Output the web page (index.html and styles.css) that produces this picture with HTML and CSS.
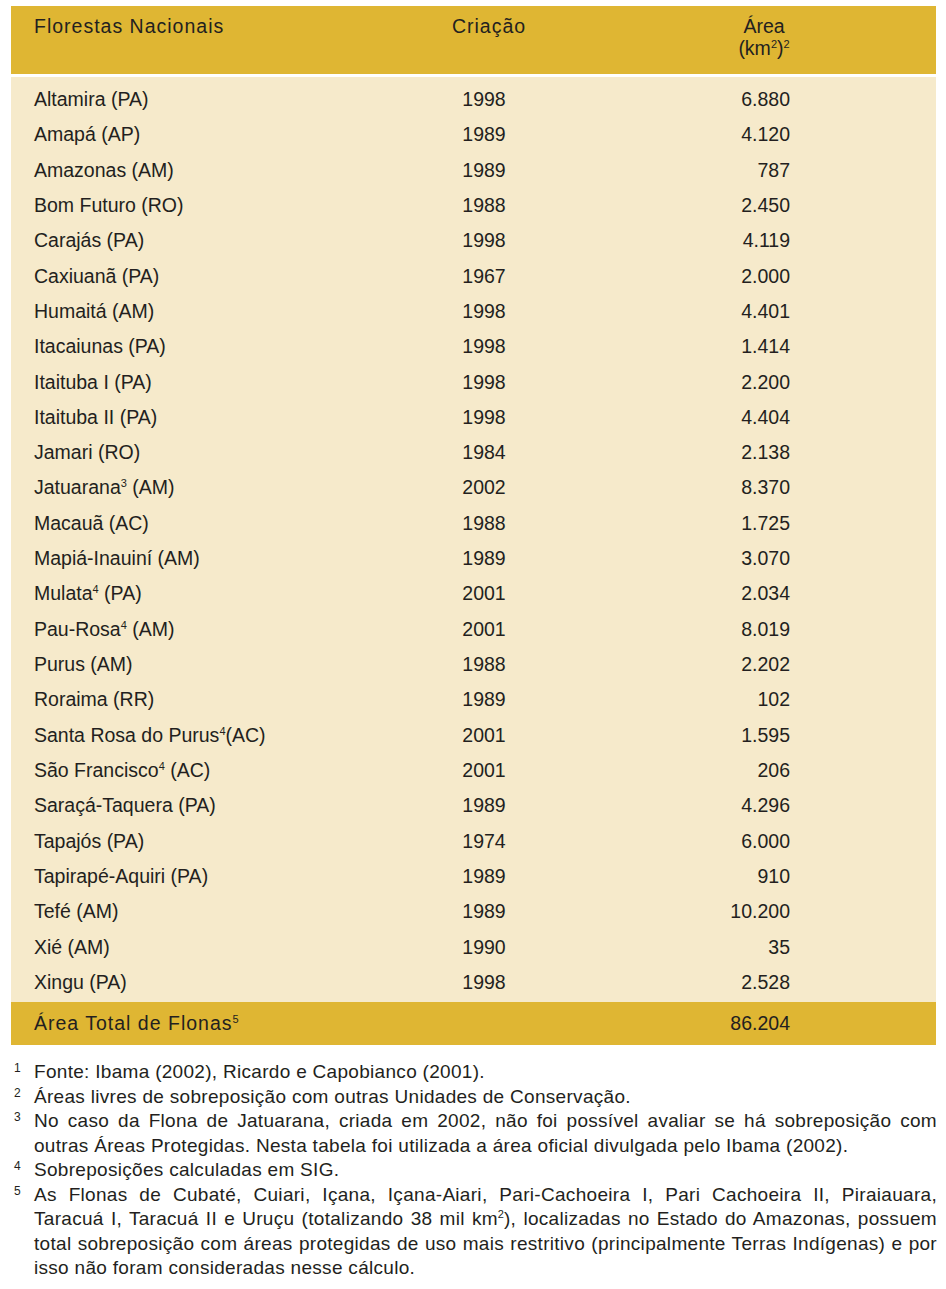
FILE: index.html
```html
<!DOCTYPE html>
<html lang="pt">
<head>
<meta charset="utf-8">
<title>Florestas Nacionais</title>
<link rel="stylesheet" href="styles.css">
</head>
<body>
<div class="panel">
  <div class="thead">
    <div class="h-name">Florestas Nacionais</div>
    <div class="h-year">Criação</div>
    <div class="h-area">Área<br>(km<sup class="s">2</sup>)<sup class="s">2</sup></div>
  </div>
  <div class="tbody">
    <div class="row"><div>Altamira (PA)</div><div class="yr">1998</div><div class="ar">6.880</div></div>
    <div class="row"><div>Amapá (AP)</div><div class="yr">1989</div><div class="ar">4.120</div></div>
    <div class="row"><div>Amazonas (AM)</div><div class="yr">1989</div><div class="ar">787</div></div>
    <div class="row"><div>Bom Futuro (RO)</div><div class="yr">1988</div><div class="ar">2.450</div></div>
    <div class="row"><div>Carajás (PA)</div><div class="yr">1998</div><div class="ar">4.119</div></div>
    <div class="row"><div>Caxiuanã (PA)</div><div class="yr">1967</div><div class="ar">2.000</div></div>
    <div class="row"><div>Humaitá (AM)</div><div class="yr">1998</div><div class="ar">4.401</div></div>
    <div class="row"><div>Itacaiunas (PA)</div><div class="yr">1998</div><div class="ar">1.414</div></div>
    <div class="row"><div>Itaituba I (PA)</div><div class="yr">1998</div><div class="ar">2.200</div></div>
    <div class="row"><div>Itaituba II (PA)</div><div class="yr">1998</div><div class="ar">4.404</div></div>
    <div class="row"><div>Jamari (RO)</div><div class="yr">1984</div><div class="ar">2.138</div></div>
    <div class="row"><div>Jatuarana<sup class="s">3</sup> (AM)</div><div class="yr">2002</div><div class="ar">8.370</div></div>
    <div class="row"><div>Macauã (AC)</div><div class="yr">1988</div><div class="ar">1.725</div></div>
    <div class="row"><div>Mapiá-Inauiní (AM)</div><div class="yr">1989</div><div class="ar">3.070</div></div>
    <div class="row"><div>Mulata<sup class="s">4</sup> (PA)</div><div class="yr">2001</div><div class="ar">2.034</div></div>
    <div class="row"><div>Pau-Rosa<sup class="s">4</sup> (AM)</div><div class="yr">2001</div><div class="ar">8.019</div></div>
    <div class="row"><div>Purus (AM)</div><div class="yr">1988</div><div class="ar">2.202</div></div>
    <div class="row"><div>Roraima (RR)</div><div class="yr">1989</div><div class="ar">102</div></div>
    <div class="row"><div>Santa Rosa do Purus<sup class="s">4</sup>(AC)</div><div class="yr">2001</div><div class="ar">1.595</div></div>
    <div class="row"><div>São Francisco<sup class="s">4</sup> (AC)</div><div class="yr">2001</div><div class="ar">206</div></div>
    <div class="row"><div>Saraçá-Taquera (PA)</div><div class="yr">1989</div><div class="ar">4.296</div></div>
    <div class="row"><div>Tapajós (PA)</div><div class="yr">1974</div><div class="ar">6.000</div></div>
    <div class="row"><div>Tapirapé-Aquiri (PA)</div><div class="yr">1989</div><div class="ar">910</div></div>
    <div class="row"><div>Tefé (AM)</div><div class="yr">1989</div><div class="ar">10.200</div></div>
    <div class="row"><div>Xié (AM)</div><div class="yr">1990</div><div class="ar">35</div></div>
    <div class="row"><div>Xingu (PA)</div><div class="yr">1998</div><div class="ar">2.528</div></div>
  </div>
  <div class="total">
    <div class="t-label">Área Total de Flonas<sup class="s">5</sup></div>
    <div></div>
    <div class="ar">86.204</div>
  </div>
</div>
<div class="notes">
  <div class="note"><sup class="n">1</sup><div class="nt"><span class="ln">Fonte: Ibama (2002), Ricardo e Capobianco (2001).</span></div></div>
  <div class="note"><sup class="n">2</sup><div class="nt"><span class="ln">Áreas livres de sobreposição com outras Unidades de Conservação.</span></div></div>
  <div class="note"><sup class="n">3</sup><div class="nt"><span class="ln jl">No caso da Flona de Jatuarana, criada em 2002, não foi possível avaliar se há sobreposição com</span><span class="ln">outras Áreas Protegidas. Nesta tabela foi utilizada a área oficial divulgada pelo Ibama (2002).</span></div></div>
  <div class="note"><sup class="n">4</sup><div class="nt"><span class="ln">Sobreposições calculadas em SIG.</span></div></div>
  <div class="note"><sup class="n">5</sup><div class="nt"><span class="ln jl">As Flonas de Cubaté, Cuiari, Içana, Içana-Aiari, Pari-Cachoeira I, Pari Cachoeira II, Piraiauara,</span><span class="ln jl">Taracuá I, Taracuá II e Uruçu (totalizando 38 mil km<sup class="s">2</sup>), localizadas no Estado do Amazonas, possuem</span><span class="ln jl">total sobreposição com áreas protegidas de uso mais restritivo (principalmente Terras Indígenas) e por</span><span class="ln">isso não foram consideradas nesse cálculo.</span></div></div>
</div>
</body>
</html>
```

FILE: styles.css
```css
* { box-sizing: border-box; }

body {
  margin: 0;
  background: #ffffff;
  color: #231f20;
  font-family: "Liberation Sans", Arial, sans-serif;
}

.panel {
  margin: 6px 0 0 11px;
  width: 925px;
  font-size: 19.5px;
}

.thead,
.row,
.total {
  display: grid;
  grid-template-columns: 346px 208px 202px 1fr;
  padding-left: 23px;
}

.thead {
  background: #dfb633;
  height: 68px;
  padding-top: 9px;
  line-height: 22px;
}

.h-name { letter-spacing: 1px; }

.h-year {
  text-align: center;
  letter-spacing: 1px;
  padding-left: 10px;
}

.h-area {
  justify-self: end;
  width: 60px;
  margin-right: -4px;
  text-align: center;
}

.tbody {
  margin-top: 3px;
  background: #f6eacb;
  padding: 5px 0 2px;
}

.row {
  height: 35.32px;
  line-height: 35.32px;
  white-space: nowrap;
}

.yr { text-align: center; }

.ar { text-align: right; }

.total {
  background: #dfb633;
  height: 43px;
  line-height: 43px;
}

.t-label { letter-spacing: 1px; }

.s {
  font-size: 11px;
  line-height: 0;
  vertical-align: 7px;
  letter-spacing: 0;
}

.notes {
  margin: 15px 0 0 14px;
  width: 923px;
  font-size: 19px;
  line-height: 24.5px;
  letter-spacing: 0.3px;
}

.note {
  display: flex;
}

.n {
  flex: 0 0 20px;
  font-size: 12px;
  line-height: 0;
  vertical-align: baseline;
  position: relative;
  top: 8px;
  letter-spacing: 0;
}

.nt {
  flex: 1;
}

.ln {
  display: block;
  white-space: nowrap;
}

.ln.jl {
  text-align: justify;
  text-align-last: justify;
  white-space: normal;
}
```
